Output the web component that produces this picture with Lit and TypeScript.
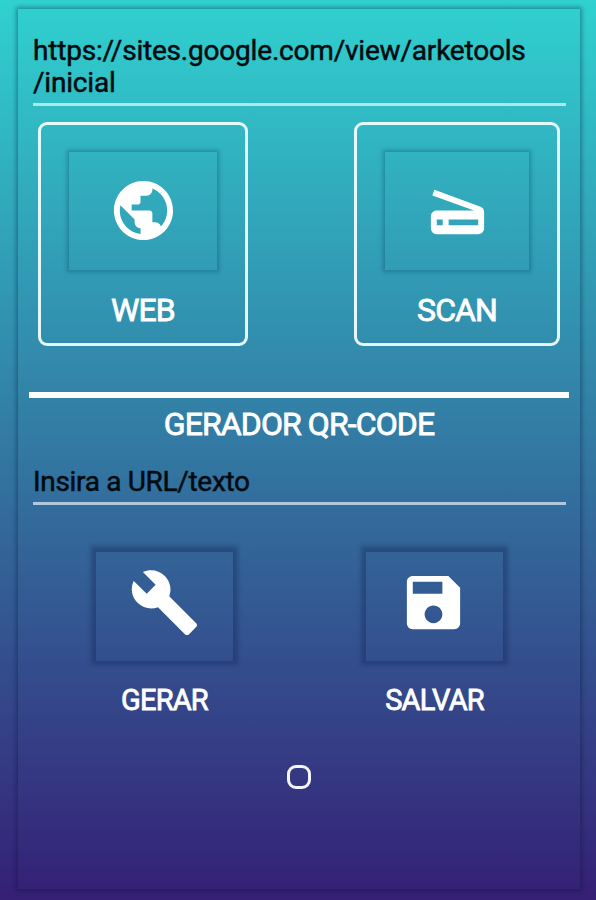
import { LitElement, html, css, svg } from "lit";
import { customElement, property } from "lit/decorators.js";

const icons: Record<string, unknown> = {
  web: svg`<path d="M12 2C6.48 2 2 6.48 2 12s4.48 10 10 10 10-4.48 10-10S17.52 2 12 2zm-1 17.93c-3.95-.49-7-3.85-7-7.93 0-.62.08-1.21.21-1.79L9 15v1c0 1.100.9 2 2 2v1.930zm6.900-2.540c-.26-.81-1-1.390-1.900-1.390h-1v-3c0-.55-.45-1-1-1H8v-2h2c.55 0 1-.45 1-1V7h2c1.100 0 2-.9 2-2v-.41c2.930 1.190 5 4.060 5 7.410 0 2.080-.8 3.970-2.100 5.390z"/>`,
  scan: svg`<path d="M19.800 10.700L4.200 5l-.7 1.900L17.600 12H5c-1.100 0-2 .9-2 2v4c0 1.100.9 2 2 2h14c1.100 0 2-.9 2-2v-5.500c0-.8-.5-1.600-1.200-1.800zM7 17H5v-2h2v2zm12 0H9v-2h10v2z"/>`,
  build: svg`<path d="M22.700 19l-9.100-9.100c.9-2.300.4-5-1.500-6.900-2-2-5-2.400-7.400-1.300L9 6 6 9 1.600 4.700C.4 7.100.9 10.100 2.900 12.100c1.900 1.900 4.600 2.400 6.900 1.500l9.100 9.100c.4.4 1 .4 1.400 0l2.300-2.300c.5-.4.5-1.100.1-1.400z"/>`,
  save: svg`<path d="M17 3H5c-1.110 0-2 .9-2 2v14c0 1.100.89 2 2 2h14c1.100 0 2-.9 2-2V7l-4-4zm-5 16c-1.660 0-3-1.340-3-3s1.340-3 3-3 3 1.340 3 3-1.340 3-3 3zm3-10H5V5h10v4z"/>`,
};

@customElement("icon-tile")
export class IconTile extends LitElement {
  @property() icon = "web";

  static styles = css`
    :host {
      display: grid;
      place-items: center;
      box-sizing: border-box;
    }
    .icon {
      display: block;
      width: 71px;
      height: 71px;
      fill: #fff;
    }
  `;

  render() {
    return html`<svg class="icon" viewBox="0 0 24 24">${icons[this.icon]}</svg>`;
  }
}

@customElement("app-root")
export class AppRoot extends LitElement {
  static styles = css`
    :host {
      display: block;
      box-sizing: border-box;
      width: 596px;
      height: 900px;
      padding: 9px 15px 11px 18px;
      overflow: hidden;
      background: linear-gradient(#30d1d0, #351f75);
      font-family: Roboto, "Liberation Sans", sans-serif;
    }
    .panel {
      display: flex;
      flex-direction: column;
      box-sizing: border-box;
      height: 880px;
      width: 562px;
      padding: 26px 11px 0;
      box-shadow: 0 0 4px 2px rgba(0, 20, 50, 0.34);
    }
    .field {
      box-sizing: border-box;
      margin: 0 4px;
      width: 533px;
      border-bottom: 3px solid rgba(255, 255, 255, 0.62);
      color: #000b10;
      font-size: 28px;
      line-height: 32px;
      -webkit-text-stroke: 0.5px #000b10;
    }
    .url {
      height: 71px;
      letter-spacing: -0.2px;
    }
    .prompt {
      height: 39px;
      margin-top: 24px;
      letter-spacing: -0.32px;
    }
    .cards {
      display: flex;
      justify-content: space-between;
      margin: 16px 9px 0;
    }
    .card {
      display: flex;
      flex-direction: column;
      align-items: center;
      box-sizing: border-box;
      width: 210px;
      height: 224px;
      padding-top: 27px;
      border: 3px solid rgba(245, 255, 255, 0.92);
      border-radius: 9px;
    }
    .card.scan {
      width: 206px;
    }
    .card icon-tile {
      width: 148px;
      height: 118px;
      padding-bottom: 2px;
      box-shadow: 0 0 4px 2px rgba(0, 50, 85, 0.3);
    }
    .card.scan icon-tile {
      width: 144px;
    }
    .label,
    .title {
      color: #fff;
      font-size: 32px;
      line-height: 36px;
      letter-spacing: -0.9px;
      text-align: center;
      -webkit-text-stroke: 0.8px #fff;
    }
    .card .label {
      margin-top: 22px;
    }
    .rule {
      height: 6px;
      width: 540px;
      margin-top: 46px;
      background: #fff;
    }
    .title {
      margin-top: 8px;
    }
    .actions {
      display: flex;
      gap: 133px;
      margin: 47px 0 0 67px;
    }
    .action {
      display: flex;
      flex-direction: column;
      align-items: center;
      width: 137px;
    }
    .action icon-tile {
      width: 137px;
      height: 109px;
      padding-bottom: 8px;
      box-shadow: 0 -1px 4px 5px rgba(20, 35, 85, 0.36);
    }
    .action icon-tile[icon="save"] {
      padding-right: 2px;
    }
    .action .label {
      margin-top: 21px;
      font-size: 29px;
      letter-spacing: -0.8px;
    }
    .ring {
      align-self: center;
      box-sizing: border-box;
      width: 24px;
      height: 24px;
      margin-top: 47px;
      border: 3px solid #f4f4ff;
      border-radius: 9px;
    }
  `;

  render() {
    return html`
      <main class="panel">
        <div class="field url">https://sites.google.com/view/arketools<br />/inicial</div>
        <section class="cards">
          <div class="card">
            <icon-tile icon="web"></icon-tile>
            <span class="label">WEB</span>
          </div>
          <div class="card scan">
            <icon-tile icon="scan"></icon-tile>
            <span class="label">SCAN</span>
          </div>
        </section>
        <div class="rule"></div>
        <div class="title">GERADOR QR-CODE</div>
        <div class="field prompt">Insira a URL/texto</div>
        <section class="actions">
          <div class="action">
            <icon-tile icon="build"></icon-tile>
            <span class="label">GERAR</span>
          </div>
          <div class="action">
            <icon-tile icon="save"></icon-tile>
            <span class="label">SALVAR</span>
          </div>
        </section>
        <div class="ring"></div>
      </main>
    `;
  }
}
